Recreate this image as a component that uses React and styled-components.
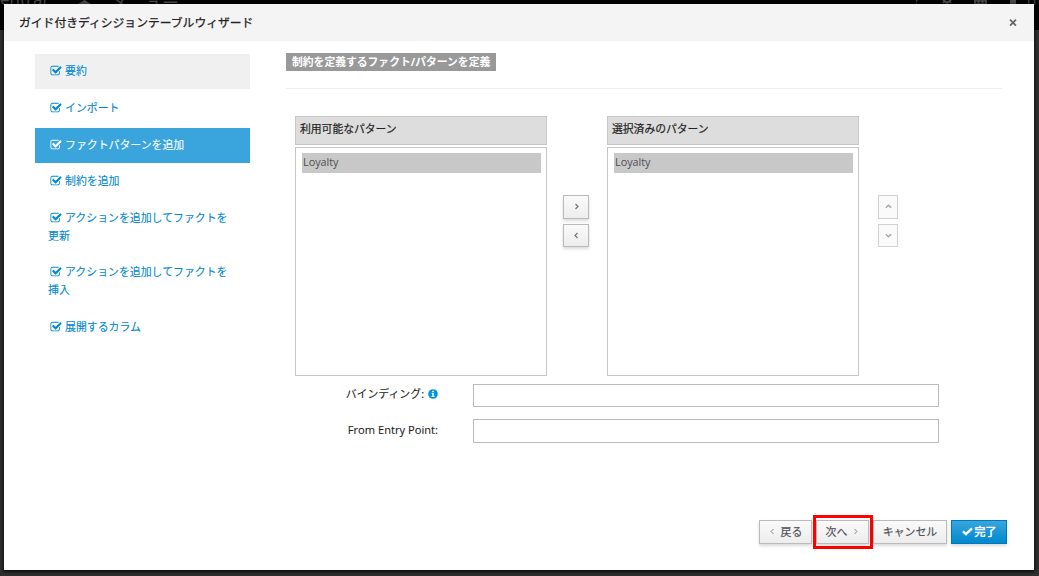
import React from "react";
import styled, { createGlobalStyle } from "styled-components";

const GlobalStyle = createGlobalStyle`
  *, *::after {
    box-sizing: border-box;
  }
  body {
    margin: 0;
    overflow: hidden;
    font-family: "Open Sans", "Noto Sans CJK JP", sans-serif;
    font-size: 11px;
    color: #333;
  }
`;

const Page = styled.div`
  position: relative;
  height: 576px;
  background-color: #2f2f2f;
  overflow: hidden;
`;

const TopNav = styled.div`
  display: flex;
  align-items: flex-start;
  height: 30px;
  background-color: #030303;
  color: #4a4a4a;
  font-size: 14px;
  line-height: 16px;
`;

const Brand = styled.div`
  width: 78px;
  margin-top: -9px;
  font-size: 17px;
`;

const MenuLabel = styled.div`
  flex: 1;
  margin: -5px 0 0 20px;
  font-size: 17px;
`;

const NavIcons = styled.div`
  display: flex;
  gap: 21px;
  margin-top: -8px;
  white-space: nowrap;

  svg {
    margin-top: 1px;
  }
`;

const UserName = styled.span`
  width: 12px;
  margin-left: -12px;
`;

const Modal = styled.div`
  position: absolute;
  top: 4px;
  left: 4px;
  display: flex;
  flex-direction: column;
  width: 1030px;
  height: 566px;
  background-color: #fff;
  box-shadow: 0 1px 3px 1px rgba(0, 0, 0, 0.7);
`;

const ModalHeader = styled.div`
  display: flex;
  justify-content: space-between;
  align-items: center;
  height: 37px;
  padding: 0 17px 1px 15px;
  background-color: #f4f4f4;
`;

const Title = styled.div`
  margin-top: -1px;
  font-size: 11.8px;
  color: #222;
  -webkit-text-stroke: 0.25px #222;
`;

const ModalBody = styled.div`
  display: flex;
  flex: 1;
  padding: 13px 32px 0 31px;
`;

const Steps = styled.div`
  width: 215px;
  margin-right: 36px;
`;

const Step = styled.div`
  margin-bottom: ${({ $first }) => ($first ? "2.2px" : "1.7px")};
  padding: 8px 12px 9px 13px;
  font-size: 10.9px;
  line-height: 17.9px;
  color: ${({ $active }) => ($active ? "#fff" : "#0088ce")};
  background-color: ${({ $active, $first }) => {
    if ($active) return "#39a5dc";
    return $first ? "#f0f0f0" : "transparent";
  }};
  -webkit-text-stroke: 0.1px;

  svg {
    margin: 0 3px 0 2px;
    vertical-align: -2px;
  }
`;

const Content = styled.div`
  flex: 1;
`;

const HeadingRow = styled.div`
  height: 36px;
  border-bottom: 1px solid #eee;
`;

const Heading = styled.div`
  width: 210px;
  height: 18px;
  margin-top: -1px;
  padding-left: 6px;
  background-color: #999;
  color: #fff;
  font-size: 10.8px;
  font-weight: bold;
  line-height: 17px;
  white-space: nowrap;
`;

const Picker = styled.div`
  display: flex;
  margin: 27px 0 0 9px;
`;

const PatternColumn = styled.div`
  width: 252px;
`;

const PatternHeader = styled.div`
  height: 29px;
  padding: 3px 4px;
  border: 1px solid #c6c6c6;
  background-color: #ddd;
  font-size: 10.8px;
  line-height: 17px;
  color: #222;
  -webkit-text-stroke: 0.2px #222;
`;

const PatternList = styled.div`
  height: 229px;
  margin-top: 2px;
  padding: 5px 5px 0 6px;
  border: 1px solid #c6c6c6;
`;

const PatternOption = styled.div`
  height: 20px;
  padding-left: 1px;
  background-color: #c8c8c8;
  color: #4d4d4d;
  font-size: 10.8px;
  line-height: 18px;
`;

const ButtonStack = styled.div`
  display: flex;
  flex-direction: column;
  gap: 5px;
  width: ${({ $narrow }) => ($narrow ? "20px" : "26px")};
  margin: 79px ${({ $narrow }) => ($narrow ? "0 0 19px" : "18px 0 16px")};
`;

const Button = styled.button`
  display: flex;
  justify-content: center;
  align-items: center;
  gap: ${({ $primary }) => ($primary ? "2px" : "5px")};
  width: ${({ $width }) => $width || "100%"};
  height: ${({ $height }) => $height || "23px"};
  padding: 0 0 1px;
  border: 1px solid ${({ $primary }) => ($primary ? "#0079b8" : "#bbb")};
  background-image: ${({ $primary }) =>
    $primary
      ? "linear-gradient(#39a5dc, #0088ce)"
      : "linear-gradient(#fafafa, #ededed)"};
  box-shadow: 0 2px 3px rgba(3, 3, 3, 0.15);
  color: ${({ $primary }) => ($primary ? "#fff" : "#4d5258")};
  font-family: inherit;
  font-size: 10.9px;
  line-height: 16px;
  white-space: nowrap;
  -webkit-text-stroke: ${({ $primary }) => ($primary ? "0.5px" : "0.2px")};

  &:disabled {
    border-color: #d1d1d1;
    background: #fafafa;
    box-shadow: none;
  }
`;

const Form = styled.div`
  display: flex;
  flex-direction: column;
  gap: 12px;
  margin-top: 8px;
`;

const FormRow = styled.div`
  display: flex;
  align-items: center;
`;

const Label = styled.label`
  display: flex;
  justify-content: flex-end;
  align-items: center;
  gap: 4px;
  width: 152px;
  margin-right: 35px;
  padding-bottom: ${({ $latin }) => ($latin ? "2px" : "3px")};
  color: #222;
  font-size: ${({ $latin }) => ($latin ? "11.15px" : "10.9px")};
  line-height: 18px;
  -webkit-text-stroke: 0.1px #222;
`;

const TextInput = styled.input`
  width: 466px;
  height: ${({ $height }) => $height};
  border: 1px solid #bbb;
  background-color: #fff;
`;

const ModalFooter = styled.div`
  display: flex;
  justify-content: flex-end;
  gap: 4px;
  height: 50px;
  padding: 0 27px 0 0;
`;

const Highlight = styled.div`
  position: relative;

  &::after {
    content: "";
    position: absolute;
    top: -5px;
    left: -3px;
    width: 60px;
    height: 34px;
    border: 3px solid #f00;
  }
`;

function CheckIcon() {
  return (
    <svg width="12" height="12" viewBox="0 0 1792 1792" fill="currentColor">
      <path d="M1472 930v318q0 119-84.5 203.5t-203.5 84.5h-832q-119 0-203.5-84.5t-84.5-203.5v-832q0-119 84.5-203.5t203.5-84.5h832q63 0 117 25 15 7 18 23 3 17-9 29l-49 49q-10 10-23 10-3 0-9-2-23-6-45-6h-832q-66 0-113 47t-47 113v832q0 66 47 113t113 47h832q66 0 113-47t47-113v-254q0-13 9-22l64-64q10-10 23-10 6 0 12 3 20 8 20 29zm231-489l-814 814q-24 24-57 24t-57-24l-430-430q-24-24-24-57t24-57l110-110q24-24 57-24t57 24l263 263 647-647q24-24 57-24t57 24l110 110q24 24 24 57t-24 57z" />
    </svg>
  );
}

function InfoIcon() {
  return (
    <svg width="10" height="10" viewBox="0 0 10 10">
      <circle cx="5" cy="5" r="4.8" fill="#0095db" />
      <path d="M4.2 1.8h1.6v1.4H4.2zM3.6 4h2.2v3h.7v1H3.5V7h.8V5h-.7z" fill="#fff" />
    </svg>
  );
}

const angles = {
  right: "M2.5 1l2.5 2.5L2.5 6",
  left: "M4.5 1L2 3.5 4.5 6",
  up: "M.8 4.8l2.7-2.6 2.7 2.6",
  down: "M.8 2.2l2.7 2.6 2.7-2.6",
};

function Angle({ dir, thin, color = "#777" }) {
  return (
    <svg width="7" height="7" viewBox="0 0 7 7" fill="none">
      <path d={angles[dir]} stroke={color} strokeWidth={thin ? 0.9 : 1.3} />
    </svg>
  );
}

function CloseIcon() {
  return (
    <svg width="8" height="8" viewBox="0 0 8 8">
      <path d="M1 1.7l6 6M7 1.7l-6 6" stroke="#666" strokeWidth="1.7" />
    </svg>
  );
}

function DoneIcon() {
  return (
    <svg width="11" height="9" viewBox="0 0 11 9" fill="none">
      <path d="M1 4.4l3 2.8 6-5.8" stroke="#fff" strokeWidth="2.4" />
    </svg>
  );
}

function HomeIcon() {
  return (
    <svg width="13" height="8" viewBox="0 0 13 8">
      <path d="M6.5 0L13 4v4H0V4z" fill="#4a4a4a" />
    </svg>
  );
}

function GearIcon() {
  return (
    <svg width="12" height="12" viewBox="0 0 12 12" fill="none" stroke="#4a4a4a">
      <circle cx="6" cy="6" r="3.4" strokeWidth="2.4" />
      <path d="M6 0v12M0 6h12M2 2l8 8M10 2l-8 8" strokeWidth="1.6" strokeDasharray="2 8" />
    </svg>
  );
}

function CaseIcon() {
  return (
    <svg width="13" height="12" viewBox="0 0 13 12" fill="none" stroke="#4a4a4a">
      <path d="M1 8h11v3H1zM1 8v3M4.5 8v3M8.5 8v3" strokeWidth="1.5" />
      <path d="M1 3v8M12 3v8M4.5 3v8M8.5 3v8" strokeWidth="1.5" />
    </svg>
  );
}

function UserIcon() {
  return (
    <svg width="10" height="12" viewBox="0 0 10 12" fill="#4a4a4a">
      <circle cx="5" cy="3" r="3" />
      <path d="M2 6h6v6H2z" />
    </svg>
  );
}

const steps = [
  "要約",
  "インポート",
  "ファクトパターンを追加",
  "制約を追加",
  "アクションを追加してファクトを更新",
  "アクションを追加してファクトを挿入",
  "展開するカラム",
];

function PatternBox({ title }) {
  return (
    <PatternColumn>
      <PatternHeader>{title}</PatternHeader>
      <PatternList>
        <PatternOption>Loyalty</PatternOption>
      </PatternList>
    </PatternColumn>
  );
}

function App() {
  return (
    <Page>
      <GlobalStyle />
      <TopNav>
        <Brand>entral</Brand>
        <HomeIcon />
        <MenuLabel>メニュー</MenuLabel>
        <NavIcons>
          <span>?</span>
          <GearIcon />
          <CaseIcon />
          <UserIcon />
          <UserName>rhp</UserName>
        </NavIcons>
      </TopNav>
      <Modal>
        <ModalHeader>
          <Title>ガイド付きディシジョンテーブルウィザード</Title>
          <CloseIcon />
        </ModalHeader>
        <ModalBody>
          <Steps>
            {steps.map((step, i) => (
              <Step key={step} $first={i === 0} $active={i === 2}>
                <CheckIcon />
                {step}
              </Step>
            ))}
          </Steps>
          <Content>
            <HeadingRow>
              <Heading>制約を定義するファクト/パターンを定義</Heading>
            </HeadingRow>
            <Picker>
              <PatternBox title="利用可能なパターン" />
              <ButtonStack>
                <Button $height="24px">
                  <Angle dir="right" />
                </Button>
                <Button>
                  <Angle dir="left" />
                </Button>
              </ButtonStack>
              <PatternBox title="選択済みのパターン" />
              <ButtonStack $narrow>
                <Button $height="24px" disabled>
                  <Angle dir="up" color="#a5a5a5" />
                </Button>
                <Button disabled>
                  <Angle dir="down" color="#a5a5a5" />
                </Button>
              </ButtonStack>
            </Picker>
            <Form>
              <FormRow>
                <Label>
                  バインディング: <InfoIcon />
                </Label>
                <TextInput $height="23px" />
              </FormRow>
              <FormRow>
                <Label $latin>From Entry Point:</Label>
                <TextInput $height="24px" />
              </FormRow>
            </Form>
          </Content>
        </ModalBody>
        <ModalFooter>
          <Button $width="53px" $height="24px">
            <Angle dir="left" thin />
            戻る
          </Button>
          <Highlight>
            <Button $width="53px" $height="24px">
              次へ
              <Angle dir="right" thin />
            </Button>
          </Highlight>
          <Button $width="74px" $height="24px">
            キャンセル
          </Button>
          <Button $width="56px" $height="24px" $primary>
            <DoneIcon />
            完了
          </Button>
        </ModalFooter>
      </Modal>
    </Page>
  );
}

export default App;
